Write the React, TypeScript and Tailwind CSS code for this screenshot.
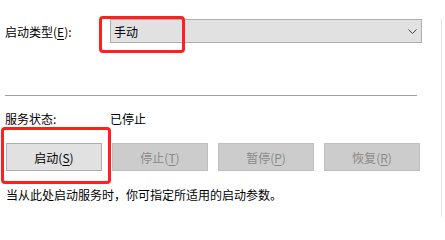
import { ReactNode } from 'react';

const font = { fontFamily: '"Noto Sans CJK SC", "Noto Sans", sans-serif' };

function Key({ k }: { k: string }) {
  return (
    <>
      (<span className="underline underline-offset-2">{k}</span>)
    </>
  );
}

function ServiceButton({ children, disabled }: { children: ReactNode; disabled?: boolean }) {
  return (
    <button
      className={
        disabled
          ? 'w-[96px] h-[28px] border border-[#bfbfbf] bg-[#cccccc] text-[#8a8a8a] flex items-center justify-center'
          : 'w-[96px] h-[28px] border border-[#adadad] bg-[#e1e1e1] text-black flex items-center justify-center'
      }
    >
      {children}
    </button>
  );
}

export default function App() {
  return (
    <div className="relative w-[445px] h-[217px] overflow-hidden bg-white text-[12px] leading-[17px] text-black" style={font}>
      <div className="w-[442px] h-full border-r border-[#e3e3e3] px-[5px]">
        {/* startup type */}
        <div className="mt-[19px] flex items-center h-[24px]">
          <span className="w-[105px]">
            启动类型<Key k="E" />:
          </span>
          <div className="w-[312px] h-[24px] border border-[#adadad] bg-[#e1e1e1] flex items-center justify-between pl-[3px] pr-[4px]">
            <span>手动</span>
            <svg width="9" height="5" viewBox="0 0 9 5" className="mt-px">
              <polyline points="0.5,0.5 4.5,4.5 8.5,0.5" fill="none" stroke="#444" strokeWidth="1" />
            </svg>
          </div>
        </div>

        <div className="mt-[52px] w-[412px] h-px bg-[#a0a0a0]" />

        {/* status */}
        <div className="mt-[14px] flex">
          <span className="w-[105px]">服务状态:</span>
          <span>已停止</span>
        </div>

        <div className="mt-[16px] ml-px flex gap-[10px]">
          <ServiceButton>
            启动<Key k="S" />
          </ServiceButton>
          <ServiceButton disabled>
            停止<Key k="T" />
          </ServiceButton>
          <ServiceButton disabled>
            暂停<Key k="P" />
          </ServiceButton>
          <ServiceButton disabled>
            恢复<Key k="R" />
          </ServiceButton>
        </div>

        <p className="mt-[15px] ml-px">当从此处启动服务时，你可指定所适用的启动参数。</p>
      </div>

      {/* annotation boxes */}
      <div className="absolute left-[99px] top-[16px] w-[86px] h-[37px] border-[3px] border-[#ff1f1f] rounded-[4px]" />
      <div className="absolute left-[1px] top-[127px] w-[110px] h-[57px] border-[3px] border-[#ff1f1f] rounded-[4px]" />
    </div>
  );
}
